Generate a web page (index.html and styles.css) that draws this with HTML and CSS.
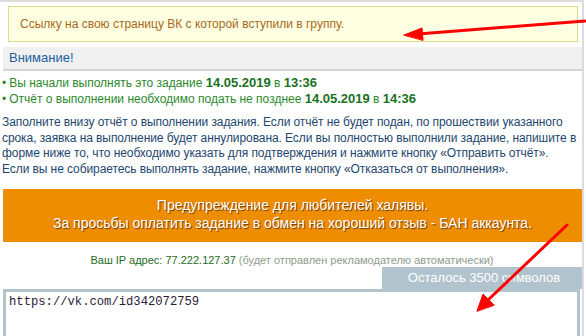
FILE: index.html
```html
<!DOCTYPE html>
<html lang="ru">
<head>
    <meta charset="UTF-8">
    <title>Отчёт о выполнении</title>
    <link rel="stylesheet" href="styles.css">
</head>
<body>

    <div class="task-page">
        <div class="hint-box">Ссылку на свою страницу ВК с которой вступили в группу.</div>

        <div class="attention-head">Внимание!</div>

        <ul class="time-list">
            <li>Вы начали выполнять это задание <b>14.05.2019</b> в <b>13:36</b></li>
            <li>Отчёт о выполнении необходимо подать не позднее <b>14.05.2019</b> в <b>14:36</b></li>
        </ul>

        <p class="info-text">Заполните внизу отчёт о выполнении задания. Если отчёт не будет подан, по прошествии указанного срока, заявка на выполнение будет аннулирована. Если вы полностью выполнили задание, напишите в форме ниже то, что необходимо указать для подтверждения и нажмите кнопку «Отправить отчёт».<br>Если вы не собираетесь выполнять задание, нажмите кнопку «Отказаться от выполнения».</p>

        <div class="warning-box">
            Предупреждение для любителей халявы.<br>
            За просьбы оплатить задание в обмен на хороший отзыв - БАН аккаунта.
        </div>

        <div class="ip-line">Ваш IP адрес: 77.222.127.37 <span>(будет отправлен рекламодателю автоматически)</span></div>

        <div class="report-form">
            <div class="counter-row">
                <div class="counter">Осталось 3500 символов</div>
            </div>
            <textarea class="report-text" rows="4">https://vk.com/id342072759</textarea>
        </div>
    </div>

    <!-- стрелки поверх скриншота -->
    <svg class="arrows" width="586" height="336" viewBox="0 0 586 336">
        <g stroke="#f00" stroke-width="3" stroke-linecap="round" fill="#f00">
            <line x1="585" y1="21" x2="418" y2="34"/>
            <polygon points="404,35 422,28 423,40" stroke-width="1"/>
            <line x1="567" y1="225" x2="488" y2="300"/>
            <polygon points="477,311 483,294 494,305" stroke-width="1"/>
        </g>
    </svg>

</body>
</html>
```

FILE: styles.css
```css
body {
    margin: 0;
    background-color: #fff;
    font-family: "Liberation Sans", Arial, sans-serif;
    font-size: 12px;
}
.task-page {
    width: 584px;
    height: 336px;
    overflow: hidden;
    border-top: 2px solid #dcdcdc;
    border-right: 2px solid #dcdcdc;
    padding: 4px 0 0 2px;
    box-sizing: border-box;
}
.hint-box {
    margin: 0 4px 0 6px;
    height: 36px;
    line-height: 34px;
    padding-left: 11px;
    background-color: #ffffe1;
    border: 1px solid #e0d88a;
    box-sizing: border-box;
    color: #a56a1e;
}
.attention-head {
    margin-top: 5px;
    margin-left: 1px;
    height: 22px;
    line-height: 22px;
    padding-left: 6px;
    background-color: #f0f0f0;
    border-bottom: 2px solid #d4d4d4;
    color: #215f9b;
    font-size: 13px;
}
.time-list {
    list-style: none;
    margin: 4px 0 0;
    padding: 0;
    color: #2c8a2c;
    line-height: 16px;
}
.time-list li::before {
    content: "\2022";
    margin-right: 3px;
}
.time-list b {
    color: #19731f;
    font-size: 13px;
    line-height: 1;
}
.info-text {
    margin: 8px 0 0;
    line-height: 15.7px;
    letter-spacing: -0.08px;
    color: #1e466e;
}
.warning-box {
    margin: 11px 0 0 1px;
    height: 53px;
    padding-top: 7px;
    box-sizing: border-box;
    background-color: #ef8d00;
    color: #fff;
    text-align: center;
    font-size: 14px;
    line-height: 18px;
    text-shadow: 1px 1px 1px #6a3a00;
}
.ip-line {
    margin-top: 12px;
    text-align: center;
    color: #236b1e;
    font-size: 11px;
}
.ip-line span {
    color: #8c9d8c;
}
.report-form {
    margin-top: 1px;
}
.counter-row {
    display: flex;
    justify-content: flex-end;
    margin-right: -4px;
}
.counter {
    width: 204px;
    height: 22px;
    line-height: 22px;
    text-align: center;
    background-color: #b1c3cc;
    color: #fff;
    font-size: 13px;
}
.report-text {
    display: block;
    width: 577px;
    margin-left: 1px;
    height: 60px;
    padding: 3px;
    border: 3px solid #b1c3cc;
    box-sizing: border-box;
    font-family: "Liberation Mono", "DejaVu Sans Mono", monospace;
    font-size: 12.2px;
    color: #2b1a3a;
    resize: none;
    outline: none;
}
.arrows {
    position: absolute;
    left: 0;
    top: 0;
    pointer-events: none;
}
```
